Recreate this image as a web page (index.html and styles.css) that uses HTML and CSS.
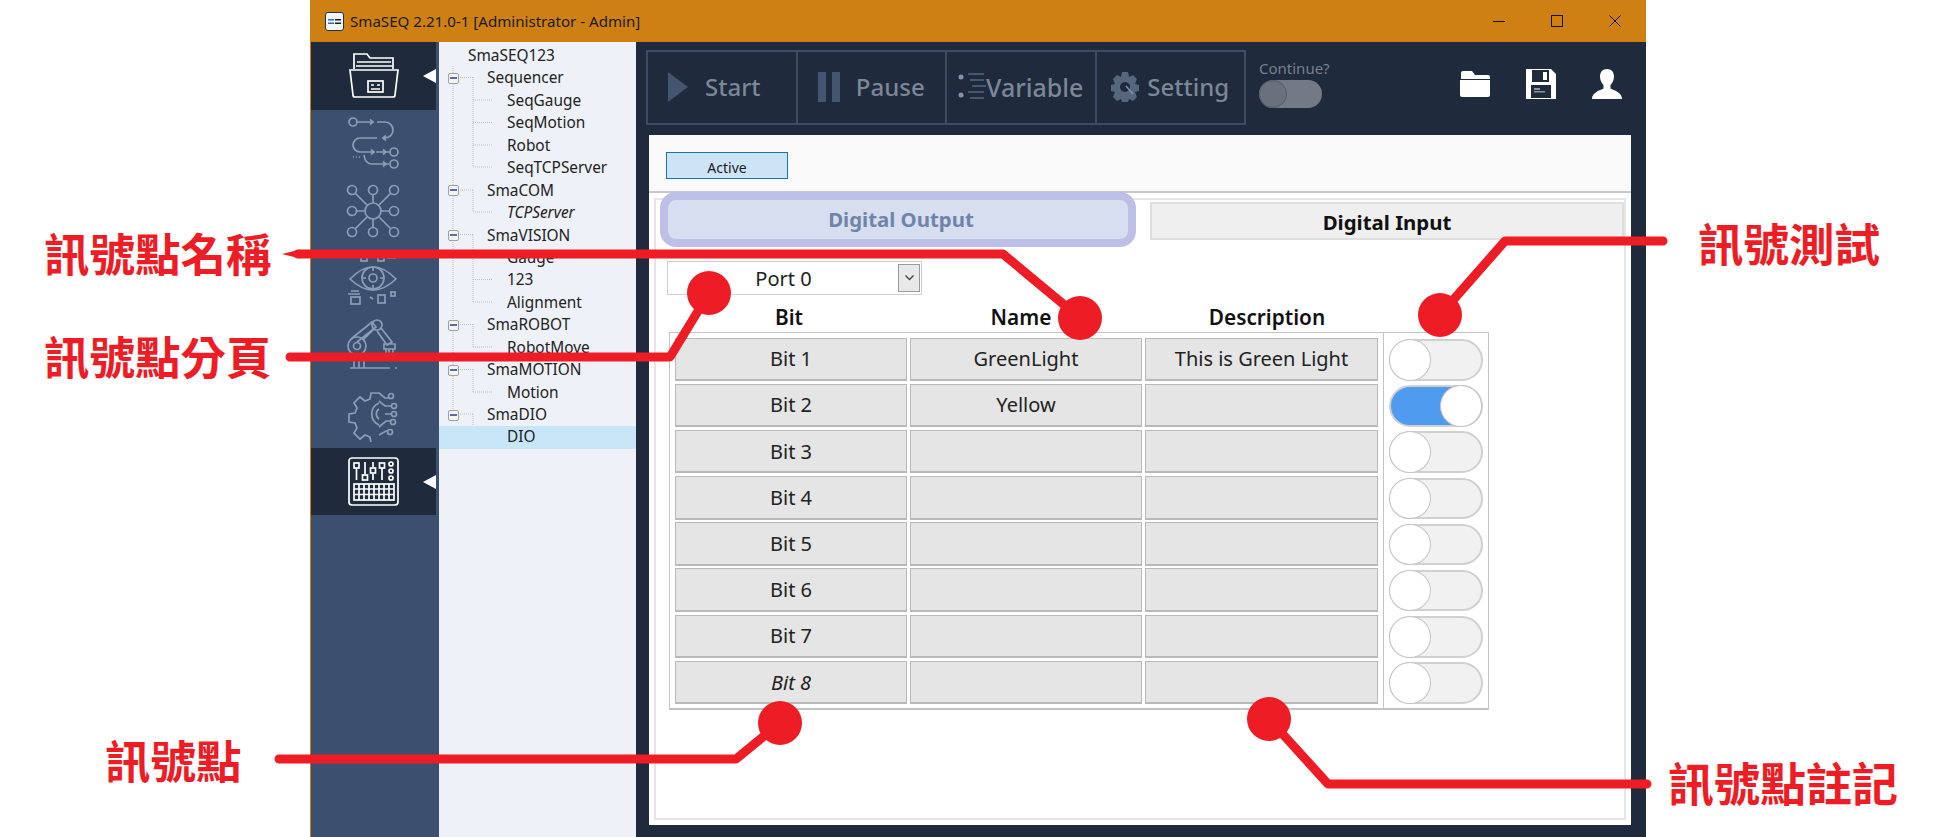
FILE: index.html
```html
<!DOCTYPE html>
<html lang="zh-Hant">
<head>
    <meta charset="UTF-8">
    <title>SmaSEQ DIO</title>
    <link rel="stylesheet" href="styles.css">
</head>
<body>
    <div class="window">
        <div class="titlebar">
            <svg class="app-icon" width="19" height="19" viewBox="0 0 19 19"><rect x="0.5" y="0.5" width="18" height="18" rx="2.5" fill="#f2f5f8" stroke="#1c3550"/><path d="M3 7h6v1.600H3zM3 10.500h6v1.600H3z" fill="#2a6fb0"/><path d="M10 7h6v1.600h-6zM10 10.500h6v1.600h-6z" fill="#14202e"/></svg>
            <span class="title-text">SmaSEQ 2.21.0-1 [Administrator - Admin]</span>
            <div class="win-controls">
                <svg width="12" height="12" viewBox="0 0 12 12"><path d="M0 6.500h12" stroke="#111" stroke-width="1"/></svg>
                <svg width="12" height="12" viewBox="0 0 12 12"><rect x="0.5" y="0.5" width="11" height="11" fill="none" stroke="#111"/></svg>
                <svg width="12" height="12" viewBox="0 0 12 12"><path d="M0.500 0.500l11 11M11.500 0.500l-11 11" stroke="#111"/></svg>
            </div>
        </div>
        <div class="main">
            <div class="sidebar">
                <div class="side-item active">
                    <svg width="56" height="56" viewBox="0 0 56 56" class="side-icon"><path d="M9 21V6h13l3 4h23v11M12 14h34M11 18h36"/><path d="M5 22h48l-3 25a2 2 0 0 1-2 2H10a2 2 0 0 1-2-2z"/><rect x="23" y="33" width="15" height="11"/><path d="M26 37h3M32 37h3M26 41h9"/></svg>
                </div>
                <div class="side-item">
                    <svg width="56" height="56" viewBox="0 0 56 56" class="side-icon"><circle cx="8" cy="7" r="4"/><path d="M12 7h16M25 4.500l3 2.500-3 2.500M32 7h8a8 8 0 0 1 0 16h-3M41 20.500l-3 2.500 3 2.500M32 23H15a7 7 0 0 0 0 14h14M26 34.500l3 2.500-3 2.500M31 37h13M19 40q1 9 8 9h17M38 34.500l3 2.500-3 2.500M38 46.500l3 2.500-3 2.500"/><circle cx="49" cy="37" r="4"/><circle cx="49" cy="49" r="4"/><path d="M8 42h7" stroke-dasharray="1 2"/></svg>
                </div>
                <div class="side-item">
                    <svg width="56" height="56" viewBox="0 0 56 56" class="side-icon"><circle cx="28" cy="28" r="8"/><circle cx="7" cy="7" r="4.500"/><circle cx="28" cy="7" r="4.500"/><circle cx="49" cy="7" r="4.500"/><circle cx="7" cy="28" r="4.500"/><circle cx="49" cy="28" r="4.500"/><circle cx="7" cy="49" r="4.500"/><circle cx="28" cy="49" r="4.500"/><circle cx="49" cy="49" r="4.500"/><path d="M28 12v8M28 36v8M12 28h8M36 28h8M10 10l12 12M46 10L34 22M10 46l12-12M46 46L34 34"/></svg>
                </div>
                <div class="side-item">
                    <svg width="56" height="56" viewBox="0 0 56 56" class="side-icon"><path d="M5 28Q28 4 51 28Q28 50 5 28z"/><circle cx="28" cy="27" r="11"/><circle cx="28" cy="27" r="4"/><path d="M28 16v4M28 34v4M17 27h4M35 27h4"/><rect x="16" y="5" width="6" height="5"/><rect x="33" y="5" width="6" height="5"/><path d="M42 7h9M3 43h12M6 40h8"/><rect x="6" y="46" width="9" height="7"/><rect x="33" y="44" width="7" height="8"/><path d="M25 46l3 2"/><rect x="46" y="41" width="4" height="4"/></svg>
                </div>
                <div class="side-item">
                    <svg width="56" height="56" viewBox="0 0 56 56" class="side-icon"><circle cx="12" cy="28" r="9"/><circle cx="12" cy="28" r="3.500"/><path d="M6 21L27 4l4 5-19 15M18 22L30 10"/><circle cx="32" cy="7" r="5"/><path d="M36 10l11 14-5 3-10-14M39 26h11v5H39zM41 31v6M48 31v6M44 31v6"/><path d="M5 50h40M9 37v13M14 37v13M19 35v15M50 50h2"/></svg>
                </div>
                <div class="side-item">
                    <svg width="56" height="56" viewBox="0 0 56 56" class="side-icon"><path d="M34 7h-8l-1 6-5 2-5-4-6 6 3 5-2 5-6 1v8l6 1 2 5-3 5 6 6 5-4 5 2 1 6h8"/><path d="M34 17a12 12 0 0 0 0 22M34 23a6 6 0 0 0 0 10"/><path d="M34 7l6 5h4M34 15l6 5h7M40 28h6M34 41l7-6h5M34 49l7-4h2"/><circle cx="46" cy="10" r="2.500"/><circle cx="49" cy="20" r="2.500"/><circle cx="49" cy="28" r="2.500"/><circle cx="48" cy="36" r="2.500"/><circle cx="45" cy="46" r="2.500"/></svg>
                </div>
                <div class="side-item active">
                    <svg width="56" height="56" viewBox="0 0 56 56" class="side-icon"><rect x="4" y="5" width="49" height="47" rx="3"/><rect x="9" y="10" width="5" height="5"/><path d="M11.500 15v12M20 9v12M28 9v5M28 21v6M37 15v12"/><rect x="17.500" y="22" width="5" height="5"/><rect x="25.500" y="15" width="5" height="5"/><rect x="34.500" y="10" width="5" height="5"/><circle cx="46" cy="11" r="2"/><circle cx="46" cy="18" r="2"/><circle cx="46" cy="25" r="2"/><rect x="9" y="31" width="40" height="16"/><path d="M9 36h40M9 41.500h40M14 31v16M19 31v16M24 31v16M29 31v16M34 31v16M39 31v16M44 31v16"/></svg>
                </div>
            </div>
            <div class="tree">
                <svg class="tree-lines" width="60" height="400" viewBox="0 0 60 400"><path d="M14 24V372M34 35V125M34 148V170M34 193V260M34 282V305M34 327V350M34 372V395M19 35.500h15M19 148h15M19 192.500h15M19 282.500h15M19 327.500h15M19 372h15M34 58h20M34 80.500h20M34 103h20M34 125h20M34 170h20M34 215h20M34 237.500h20M34 260h20M34 305h20M34 350h20M34 394.500h20"/></svg>
                <div class="tree-row root">SmaSEQ123</div>
                <div class="tree-row group"><span class="expander"></span>Sequencer</div>
                <div class="tree-row leaf">SeqGauge</div>
                <div class="tree-row leaf">SeqMotion</div>
                <div class="tree-row leaf">Robot</div>
                <div class="tree-row leaf">SeqTCPServer</div>
                <div class="tree-row group"><span class="expander"></span>SmaCOM</div>
                <div class="tree-row leaf italic">TCPServer</div>
                <div class="tree-row group"><span class="expander"></span>SmaVISION</div>
                <div class="tree-row leaf">Gauge</div>
                <div class="tree-row leaf">123</div>
                <div class="tree-row leaf">Alignment</div>
                <div class="tree-row group"><span class="expander"></span>SmaROBOT</div>
                <div class="tree-row leaf">RobotMove</div>
                <div class="tree-row group"><span class="expander"></span>SmaMOTION</div>
                <div class="tree-row leaf">Motion</div>
                <div class="tree-row group"><span class="expander"></span>SmaDIO</div>
                <div class="tree-row leaf selected">DIO</div>
            </div>
            <div class="workspace">
                <div class="toolbar">
                    <div class="tool-btn start">
                        <svg width="22" height="32" viewBox="0 0 22 32"><path d="M1 1l20 15L1 31z" fill="#44566f"/></svg>
                        <span>Start</span>
                    </div>
                    <div class="tool-btn">
                        <svg width="22" height="30" viewBox="0 0 22 30"><path d="M0 0h8v30H0zM14 0h8v30h-8z" fill="#44566f"/></svg>
                        <span>Pause</span>
                    </div>
                    <div class="tool-btn tight">
                        <svg width="28" height="30" viewBox="0 0 28 30"><circle cx="3" cy="5" r="2.500" fill="#8492a6"/><circle cx="3" cy="23" r="2.500" fill="#8492a6"/><path d="M10 2h16M12 8h14M14 14h14M10 20h16M12 26h14" stroke="#55677f" stroke-width="1.500" fill="none"/></svg>
                        <span>Variable</span>
                    </div>
                    <div class="tool-btn setting">
                        <svg width="28" height="30" viewBox="0 0 28 30"><path fill-rule="evenodd" d="M11 0h6l1 5 4-2 4 4-2 5 4 1v6l-4 1 2 5-4 4-4-2-1 3h-6l-1-3-4 2-4-4 2-5-4-1v-6l4-1-2-5 4-4 4 2zM14 10a5 5 0 1 0 0 10 5 5 0 0 0 0-10z" fill="#55677f"/><path d="M15 14l7 8" stroke="#8492a6" stroke-width="1.500"/></svg>
                        <span>Setting</span>
                    </div>
                    <div class="continue">
                        <span class="continue-label">Continue?</span>
                        <div class="continue-switch"><div class="continue-knob"></div></div>
                    </div>
                    <div class="tool-right">
                        <svg width="30" height="28" viewBox="0 0 30 28"><path d="M1 3a2 2 0 0 1 2-2h9l3 4h13a2 2 0 0 1 2 2v2H1z" fill="#fff"/><path d="M0 10h30v15a2 2 0 0 1-2 2H2a2 2 0 0 1-2-2z" fill="#fff"/></svg>
                        <svg width="30" height="30" viewBox="0 0 30 30"><path fill-rule="evenodd" d="M0 0h25l5 5v25H0zM6 1v12h17V1zM5 16v13h20V16z" fill="#fff"/><rect x="17" y="3" width="4" height="8" fill="#fff"/><path d="M8 19h6v2H8zM8 22h11v1.500H8z" fill="#8b95a3"/></svg>
                        <svg width="30" height="30" viewBox="0 0 30 30"><path d="M15 0c4.500 0 7 3 7 7.500 0 3.500-1.500 6.500-3.500 8.500v3.500C22 21.500 30 23 30 30H0c0-7 8-8.500 11.500-10.500V16C9.500 14 8 11 8 7.500 8 3 10.500 0 15 0z" fill="#fff"/></svg>
                    </div>
                </div>
                <div class="panel">
                    <div class="panel-head">
                        <button class="active-btn">Active</button>
                    </div>
                    <div class="tab-frame">
                        <div class="tabs">
                            <div class="tab tab-output">Digital Output</div>
                            <div class="tab tab-input">Digital Input</div>
                        </div>
                        <div class="tab-body">
                            <div class="port-select">
                                <span class="port-value">Port 0</span>
                                <span class="port-arrow"><svg width="9" height="6" viewBox="0 0 9 6"><path d="M0.500 0.500l4 4 4-4" fill="none" stroke="#444" stroke-width="1.300"/></svg></span>
                            </div>
                            <div class="io-head">
                                <div>Bit</div>
                                <div>Name</div>
                                <div>Description</div>
                            </div>
                            <div class="io-table">
                                <div class="io-cells">
                                    <div class="io-cell">Bit 1</div><div class="io-cell">GreenLight</div><div class="io-cell">This is Green Light</div>
                                    <div class="io-cell">Bit 2</div><div class="io-cell">Yellow</div><div class="io-cell"></div>
                                    <div class="io-cell">Bit 3</div><div class="io-cell"></div><div class="io-cell"></div>
                                    <div class="io-cell">Bit 4</div><div class="io-cell"></div><div class="io-cell"></div>
                                    <div class="io-cell">Bit 5</div><div class="io-cell"></div><div class="io-cell"></div>
                                    <div class="io-cell">Bit 6</div><div class="io-cell"></div><div class="io-cell"></div>
                                    <div class="io-cell">Bit 7</div><div class="io-cell"></div><div class="io-cell"></div>
                                    <div class="io-cell italic">Bit 8</div><div class="io-cell"></div><div class="io-cell"></div>
                                </div>
                                <div class="io-toggles">
                                    <div class="toggle"><div class="knob"></div></div>
                                    <div class="toggle on"><div class="knob"></div></div>
                                    <div class="toggle"><div class="knob"></div></div>
                                    <div class="toggle"><div class="knob"></div></div>
                                    <div class="toggle"><div class="knob"></div></div>
                                    <div class="toggle"><div class="knob"></div></div>
                                    <div class="toggle"><div class="knob"></div></div>
                                    <div class="toggle"><div class="knob"></div></div>
                                </div>
                            </div>
                        </div>
                    </div>
                </div>
            </div>
        </div>
    </div>

    <!-- red callouts drawn over the screenshot -->
    <svg class="callouts" width="1946" height="837" viewBox="0 0 1946 837">
        <path d="M282 254L300 249.500V258.500z" fill="#ee1c25"/>
        <polyline points="298,254 1003,254 1080,318"/>
        <polyline points="290,357 670,357 709,293"/>
        <polyline points="279,759 736,759 780,723"/>
        <polyline points="1269,719 1328,784 1647,784"/>
        <polyline points="1440,315 1505,241 1663,241"/>
        <circle cx="1080" cy="318" r="22"/>
        <circle cx="709" cy="293" r="22"/>
        <circle cx="780" cy="723" r="22"/>
        <circle cx="1269" cy="719" r="22"/>
        <circle cx="1440" cy="315" r="22"/>
    </svg>
    <div class="callout-label label-name">訊號點名稱</div>
    <div class="callout-label label-page">訊號點分頁</div>
    <div class="callout-label label-test">訊號測試</div>
    <div class="callout-label label-point">訊號點</div>
    <div class="callout-label label-note">訊號點註記</div>
</body>
</html>
```

FILE: styles.css
```css
body {
    margin: 0;
    width: 1946px;
    height: 837px;
    overflow: hidden;
    background-color: #fff;
    font-family: "Noto Sans", sans-serif;
    position: relative;
}
.italic {
    font-style: italic;
}

/* window */
.window {
    margin-left: 310px;
    width: 1336px;
    height: 837px;
    display: flex;
    flex-direction: column;
}
.titlebar {
    height: 42px;
    background-color: #cf8013;
    display: flex;
    align-items: center;
    padding-left: 15px;
    flex-shrink: 0;
}
.title-text {
    margin-left: 6px;
    font-size: 15.1px;
    color: #1a1a1a;
}
.win-controls {
    margin-left: auto;
    display: flex;
    gap: 46px;
    padding-right: 25px;
}
.main {
    flex: 1;
    display: flex;
    min-height: 0;
}

/* left icons */
.sidebar {
    width: 129px;
    flex-shrink: 0;
    box-sizing: border-box;
    border-left: 1px solid #cf8013;
    padding-right: 3px;
    background-color: #3b506f;
}
.side-item {
    height: 67.6px;
    display: flex;
    align-items: center;
    justify-content: center;
    position: relative;
    padding-right: 2px;
    box-sizing: border-box;
}
.side-icon {
    fill: none;
    stroke: #8c9db6;
    stroke-width: 1.7;
}
.side-item.active {
    background-color: #1f2a3c;
}
.side-item.active .side-icon {
    stroke: #fff;
}
.side-item.active::after {
    content: "";
    position: absolute;
    right: 0;
    top: 27px;
    border-style: solid;
    border-width: 7px 13px 7px 0;
    border-color: transparent #fff transparent transparent;
}

/* project tree */
.tree {
    width: 197px;
    flex-shrink: 0;
    background-color: #eef1f7;
    padding-top: 3px;
    position: relative;
    color: #222;
    font-size: 15.4px;
}
.tree-lines {
    position: absolute;
    left: 0;
    top: 0;
    fill: none;
    stroke: #bdbdbd;
    stroke-dasharray: 1 1;
}
.tree-row {
    height: 22.45px;
    line-height: 22.45px;
    display: flex;
    align-items: center;
    position: relative;
}
.tree-row.root {
    padding-left: 29px;
}
.tree-row.group {
    padding-left: 9px;
}
.tree-row.leaf {
    padding-left: 68px;
}
.tree-row.selected {
    background-color: #c8e6f7;
}
.expander {
    width: 9px;
    height: 9px;
    border: 1px solid #a0a0a0;
    border-radius: 2px;
    background-color: #f4f4f4;
    margin-right: 28px;
    position: relative;
}
.expander::after {
    content: "";
    position: absolute;
    left: 1px;
    right: 1px;
    top: 3px;
    height: 2px;
    background-color: #5a6ca8;
}

/* right side */
.workspace {
    flex: 1;
    background-color: #1f2a3c;
    min-width: 0;
    display: flex;
    flex-direction: column;
}
.toolbar {
    height: 93px;
    box-sizing: border-box;
    padding: 8px 0 0 10px;
    display: flex;
    flex-shrink: 0;
}
.tool-btn {
    width: 151.5px;
    height: 75px;
    box-sizing: border-box;
    border: 2px solid #3d4c64;
    margin-right: -2px;
    padding-bottom: 2px;
    display: flex;
    align-items: center;
    justify-content: center;
    gap: 16px;
    color: #7c8796;
    font-size: 24px;
    font-weight: 500;
}
.tool-btn.start {
    padding-right: 16px;
}
.tool-btn.setting {
    gap: 8px;
}
.tool-btn.tight {
    gap: 0;
}
.tool-btn.tight span {
    font-size: 25px;
}
.continue {
    margin-left: 15px;
    display: flex;
    flex-direction: column;
    gap: 2px;
    padding-top: 8px;
}
.continue-label {
    color: #77808e;
    font-size: 15px;
    line-height: 20px;
}
.continue-switch {
    width: 63px;
    height: 28px;
    border-radius: 14px;
    background-color: #737a85;
}
.continue-knob {
    width: 28px;
    height: 28px;
    box-sizing: border-box;
    border-radius: 50%;
    background-color: #6a717d;
    border: 1px solid #565c67;
}
.tool-right {
    margin-left: auto;
    display: flex;
    align-items: center;
    gap: 36px;
    padding: 0 24px 18px 0;
}
.panel {
    height: 690px;
    margin: 0 15px 0 13px;
    background-color: #fff;
    display: flex;
    flex-direction: column;
}
.panel-head {
    height: 58px;
    flex-shrink: 0;
    box-sizing: border-box;
    background-color: #fafafa;
    border-bottom: 2px solid #c8c8c8;
    padding: 17px 0 0 17px;
}
.active-btn {
    width: 122px;
    height: 27px;
    display: block;
    padding: 3px 0 0;
    background-color: #cde4f7;
    border: 1px solid #1a72b8;
    color: #1a1a1a;
    font-family: "Noto Sans", sans-serif;
    font-size: 14px;
}
.tab-frame {
    margin: 5px 5px 5px 5px;
    flex: 1;
    border: 2px solid #e6e6e6;
    display: flex;
    flex-direction: column;
    min-height: 0;
}
.tabs {
    display: flex;
    align-items: flex-start;
    height: 47px;
    padding-left: 4px;
    gap: 14px;
}
.tab {
    display: flex;
    align-items: center;
    justify-content: center;
    box-sizing: border-box;
    font-weight: bold;
}
.tab-output {
    width: 476px;
    height: 55px;
    margin-top: -8px;
    padding: 0 0 2px 6px;
    border: 8px solid #bdbfe6;
    border-radius: 16px;
    background-color: #d6deef;
    color: #6f84a8;
    font-size: 20.4px;
    position: relative;
}
.tab-input {
    flex: 1;
    height: 38px;
    margin-top: 2px;
    padding-top: 1px;
    background-color: #efefef;
    border: 2px solid #dedede;
    color: #111;
    font-size: 20.4px;
}
.tab-body {
    padding: 14px 0 0 11px;
}
.port-select {
    width: 255px;
    height: 34px;
    box-sizing: border-box;
    border: 1px solid #d0d0d0;
    display: flex;
    align-items: center;
    font-size: 20px;
    color: #222;
    padding: 0 1px;
}
.port-value {
    flex: 1;
    text-align: center;
}
.port-arrow {
    width: 22px;
    height: 28px;
    box-sizing: border-box;
    border: 1px solid #9a9a9a;
    background-color: #e9e9e9;
    display: flex;
    align-items: center;
    justify-content: center;
}
.io-head {
    height: 37px;
    margin-left: 7px;
    display: grid;
    grid-template-columns: 230px 234px 258px;
    align-items: center;
    text-align: center;
    font-size: 20.8px;
    font-weight: 600;
    color: #111;
    padding-top: 6px;
    box-sizing: border-box;
}
.io-table {
    margin-left: 2px;
    width: 820px;
    height: 378px;
    box-sizing: border-box;
    border: 1px solid #c4c4c4;
    border-bottom-width: 2px;
    display: flex;
}
.io-cells {
    width: 713px;
    box-sizing: border-box;
    padding: 4.5px 0 0 5px;
    display: grid;
    grid-template-columns: 232px 232px 233px;
    grid-auto-rows: 43.6px;
    column-gap: 3px;
    row-gap: 2.6px;
}
.io-cell {
    box-sizing: border-box;
    background-color: #e5e5e5;
    border: 1px solid #b9b9b9;
    border-bottom-width: 2px;
    display: flex;
    align-items: center;
    justify-content: center;
    font-size: 20px;
    color: #222;
}
.io-toggles {
    flex: 1;
    border-left: 1px solid #c4c4c4;
    padding: 6px 0 0 5px;
    display: flex;
    flex-direction: column;
    gap: 4.7px;
}
.toggle {
    width: 94px;
    height: 41.5px;
    box-sizing: border-box;
    border: 2px solid #d0d0d0;
    border-radius: 21px;
    background-color: #f1f1f1;
    position: relative;
}
.knob {
    position: absolute;
    left: -2px;
    top: -2px;
    width: 42px;
    height: 41.5px;
    box-sizing: border-box;
    border: 1.5px solid #c4c4c4;
    border-radius: 50%;
    background-color: #fff;
}
.toggle.on {
    background-color: #4f9bef;
}
.toggle.on .knob {
    left: auto;
    right: -1px;
}

/* callouts */
.callouts {
    position: absolute;
    left: 0;
    top: 0;
    fill: #ee1c25;
}
.callouts polyline {
    fill: none;
    stroke: #ee1c25;
    stroke-width: 9;
    stroke-linecap: round;
    stroke-linejoin: round;
}
.callout-label {
    position: absolute;
    color: #ee1c25;
    font-family: "Noto Sans CJK TC", sans-serif;
    font-weight: 700;
    font-size: 45.5px;
    line-height: 50px;
    white-space: nowrap;
}
.label-name {
    left: 44px;
    top: 227px;
}
.label-page {
    left: 44px;
    top: 330px;
}
.label-test {
    left: 1698px;
    top: 217px;
}
.label-point {
    left: 105px;
    top: 734px;
}
.label-note {
    left: 1668px;
    top: 756px;
    font-size: 46px;
}
```
